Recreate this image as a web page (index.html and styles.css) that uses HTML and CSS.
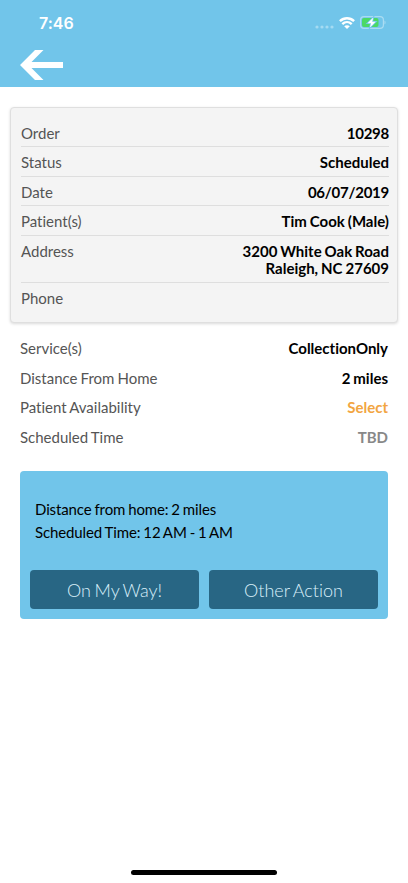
FILE: index.html
```html
<!DOCTYPE html>
<html lang="en">
<head>
    <meta charset="UTF-8">
    <meta name="viewport" content="width=device-width, initial-scale=1.0">
    <title>Order Details</title>
    <link rel="stylesheet" href="styles.css">
</head>
<body>
    <header class="header">
        <div class="status-bar">
            <span class="clock">7:46</span>
            <div class="status-icons">
                <svg class="signal" width="19" height="4" viewBox="0 0 19 4">
                    <circle cx="2" cy="2" r="1.6" />
                    <circle cx="7" cy="2" r="1.6" />
                    <circle cx="12" cy="2" r="1.6" />
                    <circle cx="17" cy="2" r="1.6" />
                </svg>
                <svg class="wifi" width="16" height="12" viewBox="0 0 16 12">
                    <path d="M.9 4.2C5 .3 11 .3 15.100 4.2" />
                    <path d="M3.300 7.100C6 4.500 10 4.500 12.700 7.100" />
                    <path class="dot" d="M8 12L5.200 9.200C6.800 7.800 9.200 7.800 10.800 9.200Z" />
                </svg>
                <svg class="battery" width="26" height="13" viewBox="0 0 26 13">
                    <rect class="shell" x=".6" y=".6" width="22.800" height="11.800" rx="3.400" />
                    <rect class="charge" x="2" y="2" width="16.500" height="9" rx="2" />
                    <path class="nub" d="M24.500 4.500C25.900 5.200 25.900 7.800 24.500 8.500Z" />
                    <path class="bolt" d="M13.300 1.500L7.500 7.200H11L9.900 11.500L15.700 5.800H12.200Z" />
                </svg>
            </div>
        </div>
        <a class="back" href="#" aria-label="Back">
            <svg width="43" height="30" viewBox="0 0 43 30">
                <path d="M15 0H23.500L11.500 12H43V18H11.500L23.500 30H15L0 15Z" />
            </svg>
        </a>
    </header>

    <main>
        <div class="card">
            <div class="row"><span class="label">Order</span><span class="value number">10298</span></div>
            <div class="row"><span class="label">Status</span><span class="value">Scheduled</span></div>
            <div class="row"><span class="label">Date</span><span class="value number">06/07/2019</span></div>
            <div class="row"><span class="label">Patient(s)</span><span class="value">Tim Cook (Male)</span></div>
            <div class="row"><span class="label">Address</span><span class="value">3200 White Oak Road<br>Raleigh, NC 27609</span></div>
            <div class="row"><span class="label">Phone</span><span class="value"></span></div>
        </div>

        <div class="details">
            <div class="row"><span class="label">Service(s)</span><span class="value">CollectionOnly</span></div>
            <div class="row"><span class="label">Distance From Home</span><span class="value">2 miles</span></div>
            <div class="row"><span class="label">Patient Availability</span><span class="value select">Select</span></div>
            <div class="row"><span class="label">Scheduled Time</span><span class="value muted">TBD</span></div>
        </div>

        <div class="panel">
            <div class="summary">
                <div>Distance from home: 2 miles</div>
                <div>Scheduled Time: 12 AM - 1 AM</div>
            </div>
            <div class="actions">
                <button>On My Way!</button>
                <button>Other Action</button>
            </div>
        </div>
    </main>

    <div class="home-bar"></div>
</body>
</html>
```

FILE: styles.css
```css
body {
    font-family: Lato, sans-serif;
    font-size: 15px;
    font-variant-ligatures: none;
    word-spacing: -0.8px;
    margin: 0;
    height: 883px;
    box-sizing: border-box;
    padding-bottom: 8px;
    display: flex;
    flex-direction: column;
    background-color: #fff;
}
.header {
    height: 87px;
    background-color: #71c5ea;
}
.status-bar {
    display: flex;
    justify-content: space-between;
    align-items: center;
    height: 45px;
    padding: 0 22px 0 39px;
    box-sizing: border-box;
}
.clock {
    font-family: Inter, sans-serif;
    font-size: 16px;
    font-weight: 600;
    color: #fff;
}
.status-icons {
    display: flex;
    align-items: center;
}
.signal {
    fill: #a5dbf2;
    margin: 8px 5px 0 0;
}
.wifi {
    fill: none;
    stroke: #fff;
    stroke-width: 2.4;
    margin-right: 5px;
}
.wifi .dot {
    fill: #fff;
    stroke: none;
}
.shell {
    fill: none;
    stroke: #aadcf2;
    stroke-width: 1.2;
}
.charge {
    fill: #4bd964;
}
.nub {
    fill: #aadcf2;
}
.bolt {
    fill: #fff;
    stroke: #71c5ea;
    stroke-width: 1.6;
    paint-order: stroke;
}
.back {
    display: block;
    width: 43px;
    height: 30px;
    margin: 5px 0 0 20px;
}
.back svg {
    display: block;
    fill: #fff;
}
.card {
    margin: 20px 10px 0;
    height: 216px;
    box-sizing: border-box;
    padding: 10px 8px 0 10px;
    background-color: #f4f4f4;
    border: 1px solid #dfdfdf;
    border-radius: 4px;
    box-shadow: 0 1px 3px rgba(0, 0, 0, 0.15);
}
.row {
    display: flex;
    justify-content: space-between;
    line-height: 17.800px;
    padding: 6.100px 0 5.600px;
}
.card .row {
    border-bottom: 1px solid #dedede;
    padding: 6.600px 0 4.100px;
}
.card .row:last-child {
    border-bottom: none;
}
.label {
    color: #555;
}
.value {
    font-weight: bold;
    text-align: right;
    word-spacing: -0.7px;
    color: #000;
}
.number {
    letter-spacing: -0.25px;
}
.select {
    color: #f2a541;
}
.muted {
    color: #888;
}
.details {
    margin: 11px 20px 0;
}
.panel {
    margin: 19px 20px 0;
    height: 148px;
    box-sizing: border-box;
    padding: 27px 10px 10px;
    background-color: #71c5ea;
    border-radius: 4px;
}
.summary {
    padding-left: 5px;
    line-height: 23px;
    letter-spacing: -0.12px;
    color: #000;
}
.actions {
    display: flex;
    gap: 10px;
    margin-top: 26px;
}
button {
    flex: 1;
    height: 39px;
    padding: 1px 0 0;
    border: none;
    border-radius: 4px;
    background-color: #286684;
    color: #d9effa;
    font-family: Lato, sans-serif;
    font-size: 18px;
    font-weight: 300;
    font-variant-ligatures: none;
    word-spacing: -1.2px;
}
.home-bar {
    width: 146px;
    height: 5px;
    margin: auto auto 0;
    border-radius: 3px;
    background-color: #000;
}
```
